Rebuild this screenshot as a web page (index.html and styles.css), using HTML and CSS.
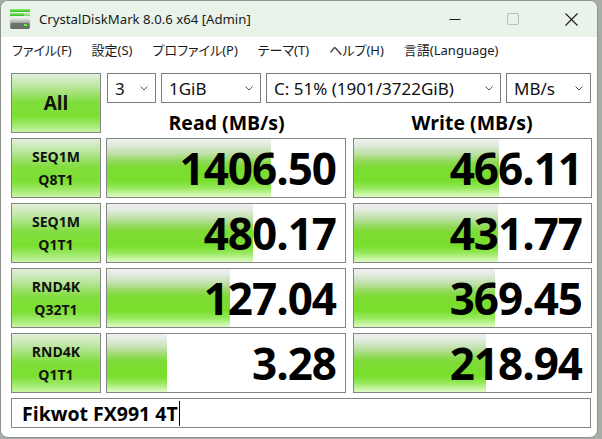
FILE: index.html
```html
<!DOCTYPE html>
<html lang="ja">
<head>
<meta charset="utf-8">
<title>CrystalDiskMark 8.0.6 x64 [Admin]</title>
<link rel="stylesheet" href="styles.css">
</head>
<body>
<div class="window">
  <div class="titlebar">
    <svg class="appicon" width="22" height="22" viewBox="0 0 22 22">
      <defs>
        <linearGradient id="gbar" x1="0" y1="0" x2="0" y2="1">
          <stop offset="0" stop-color="#8ef06a"/>
          <stop offset="1" stop-color="#2fb82a"/>
        </linearGradient>
        <linearGradient id="body" x1="0" y1="0" x2="0" y2="1">
          <stop offset="0" stop-color="#e8ece8"/>
          <stop offset="0.5" stop-color="#9aa09a"/>
          <stop offset="1" stop-color="#5e645e"/>
        </linearGradient>
      </defs>
      <rect x="1" y="1" width="20" height="3" fill="url(#gbar)"/>
      <rect x="1" y="5" width="14" height="3" fill="url(#gbar)"/>
      <rect x="1" y="5" width="20" height="3" fill="url(#gbar)" opacity="0.55"/>
      <rect x="1" y="10" width="20" height="11" rx="2" fill="url(#body)"/>
      <rect x="2" y="15" width="18" height="5" rx="1" fill="#6b716b"/>
      <rect x="15" y="16" width="3" height="2" fill="#6cf04a"/>
    </svg>
    <span class="title">CrystalDiskMark 8.0.6 x64 [Admin]</span>
    <div class="controls">
      <svg class="ctl" width="46" height="30" viewBox="0 0 46 30"><path d="M17.5 15.5h11" stroke="#1a1a1a" stroke-width="1"/></svg>
      <svg class="ctl" width="46" height="30" viewBox="0 0 46 30"><rect x="17.5" y="9.5" width="11" height="11" rx="1.5" fill="none" stroke="#b8beb8" stroke-width="1"/></svg>
      <svg class="ctl" width="46" height="30" viewBox="0 0 46 30"><path d="M17.5 9.5l12 12M29.5 9.5l-12 12" stroke="#1a1a1a" stroke-width="1.1"/></svg>
    </div>
  </div>
  <div class="menubar">
    <span>ファイル(F)</span>
    <span>設定(S)</span>
    <span>プロファイル(P)</span>
    <span>テーマ(T)</span>
    <span>ヘルプ(H)</span>
    <span>言語(Language)</span>
  </div>
  <div class="content">
    <div class="grid">
      <div class="btn all">All</div>
      <div class="top">
        <div class="combos">
          <div class="combo c1"><span>3</span><svg width="8" height="5" viewBox="0 0 8 5"><path d="M0.5 0.5l3.5 3.5 3.5-3.5" fill="none" stroke="#555" stroke-width="1"/></svg></div>
          <div class="combo c2"><span>1GiB</span><svg width="8" height="5" viewBox="0 0 8 5"><path d="M0.5 0.5l3.5 3.5 3.5-3.5" fill="none" stroke="#555" stroke-width="1"/></svg></div>
          <div class="combo c3"><span>C: 51% (1901/3722GiB)</span><svg width="8" height="5" viewBox="0 0 8 5"><path d="M0.5 0.5l3.5 3.5 3.5-3.5" fill="none" stroke="#555" stroke-width="1"/></svg></div>
          <div class="combo c4"><span>MB/s</span><svg width="8" height="5" viewBox="0 0 8 5"><path d="M0.5 0.5l3.5 3.5 3.5-3.5" fill="none" stroke="#555" stroke-width="1"/></svg></div>
        </div>
        <div class="headers">
          <div class="hdr">Read (MB/s)</div>
          <div class="hdr">Write (MB/s)</div>
        </div>
      </div>

      <div class="btn label"><span>SEQ1M</span><span>Q8T1</span></div>
      <div class="meter read"><div class="fill" style="width:69.1%"></div><div class="num">1406.50</div></div>
      <div class="meter write"><div class="fill" style="width:61.1%"></div><div class="num">466.11</div></div>

      <div class="btn label"><span>SEQ1M</span><span>Q1T1</span></div>
      <div class="meter read"><div class="fill" style="width:61.4%"></div><div class="num">480.17</div></div>
      <div class="meter write"><div class="fill" style="width:60.6%"></div><div class="num">431.77</div></div>

      <div class="btn label"><span>RND4K</span><span>Q32T1</span></div>
      <div class="meter read"><div class="fill" style="width:51.7%"></div><div class="num">127.04</div></div>
      <div class="meter write"><div class="fill" style="width:59.5%"></div><div class="num">369.45</div></div>

      <div class="btn label"><span>RND4K</span><span>Q1T1</span></div>
      <div class="meter read"><div class="fill" style="width:25.3%"></div><div class="num">3.28</div></div>
      <div class="meter write"><div class="fill" style="width:55.7%"></div><div class="num">218.94</div></div>

      <div class="namebox"><span class="name">Fikwot FX991 4T</span><span class="caret"></span></div>
    </div>
  </div>
</div>
</body>
</html>
```
FILE: styles.css
```css
html, body {
  margin: 0;
  padding: 0;
}
body {
  width: 602px;
  height: 439px;
  overflow: hidden;
  background: #a6ada6;
  font-family: "Open Sans", "Noto Sans", "Noto Sans CJK JP", sans-serif;
  color: #000;
}
.window {
  width: 598px;
  height: 438px;
  box-sizing: border-box;
  border: 1px solid #8d928d;
  border-radius: 8px;
  overflow: hidden;
  background: #ffffff;
  display: flex;
  flex-direction: column;
}
.titlebar {
  height: 36px;
  flex: none;
  background: #e9f3e9;
  display: flex;
  align-items: center;
}
.appicon {
  margin-left: 8px;
}
.title {
  margin-left: 8px;
  font-family: "Noto Sans", "Open Sans", sans-serif;
  font-size: 13.2px;
  color: #1a1a1a;
}
.controls {
  margin-left: auto;
  display: flex;
  align-self: flex-start;
  margin-top: 3px;
  margin-right: 3px;
}
.ctl {
  display: block;
  margin-left: 12px;
}
.menubar {
  height: 25px;
  flex: none;
  display: flex;
  align-items: center;
  gap: 20px;
  padding-left: 11px;
  font-family: "Noto Sans", "Noto Sans CJK JP", sans-serif;
  font-feature-settings: "palt";
  font-size: 13px;
  color: #1a1a1a;
}
.content {
  padding: 11px 0 0 10px;
}
.grid {
  display: grid;
  grid-template-columns: 90px 241px 240px;
  grid-template-rows: 60px 60px 60px 60px 60px 30px;
  column-gap: 5px;
  row-gap: 5px;
}
.btn {
  box-sizing: border-box;
  border: 1px solid #858585;
  background: linear-gradient(to bottom, #e2f0da 0%, #c8e9b4 15%, #a4e27a 32%, #82dd3e 48%, #7bdf30 72%, #9be864 86%, #c9f4a4 100%);
  font-weight: 700;
  display: flex;
  flex-direction: column;
  align-items: center;
  justify-content: center;
  color: #111;
}
.all {
  font-size: 19px;
}
.label {
  font-size: 14px;
  line-height: 23px;
}
.label span {
  display: block;
}
.top {
  grid-column: 2 / 4;
  display: flex;
  flex-direction: column;
}
.combos {
  display: flex;
  gap: 5px;
  height: 30px;
  margin-left: 1px;
}
.combo {
  box-sizing: border-box;
  height: 30px;
  border: 1px solid #7e7e7e;
  background: #fff;
  display: flex;
  align-items: center;
  justify-content: space-between;
  padding: 0 7px 0 7px;
  font-family: "Noto Sans", "Open Sans", sans-serif;
  font-size: 17px;
  color: #111;
}
.combo svg {
  flex: none;
  margin-top: 1px;
}
.c1 { width: 49px; }
.c2 { width: 100px; }
.c3 { width: 235px; }
.c4 { width: 85px; }
.headers {
  flex: 1;
  display: grid;
  grid-template-columns: 241px 240px;
  column-gap: 5px;
  align-items: end;
}
.hdr {
  text-align: center;
  font-weight: 700;
  font-size: 19.5px;
  line-height: 24px;
  position: relative;
  top: 2px;
}
.meter {
  box-sizing: border-box;
  width: 240px;
  border: 1px solid #858585;
  background: #fff;
  display: grid;
}
.write {
  width: 239px;
  justify-self: end;
}
.fill,
.num {
  grid-area: 1 / 1;
}
.fill {
  height: 100%;
  background: linear-gradient(to bottom, #eef1ee 0%, #e2ebe0 10%, #bfe0a8 25%, #93da5c 38%, #7ddb34 48%, #78df2c 72%, #95e85a 84%, #c6f5a0 94%, #dcfac4 100%);
}
.num {
  text-align: right;
  padding-right: 9px;
  font-weight: 700;
  font-size: 44px;
  line-height: 58px;
  letter-spacing: -1px;
}
.namebox {
  grid-column: 1 / 4;
  box-sizing: border-box;
  width: 580px;
  border: 1px solid #858585;
  background: #fff;
  display: flex;
  align-items: center;
  padding-left: 10px;
}
.name {
  font-weight: 700;
  font-size: 19.5px;
}
.caret {
  width: 1px;
  height: 25px;
  background: #000;
  margin-left: 1px;
}
```
